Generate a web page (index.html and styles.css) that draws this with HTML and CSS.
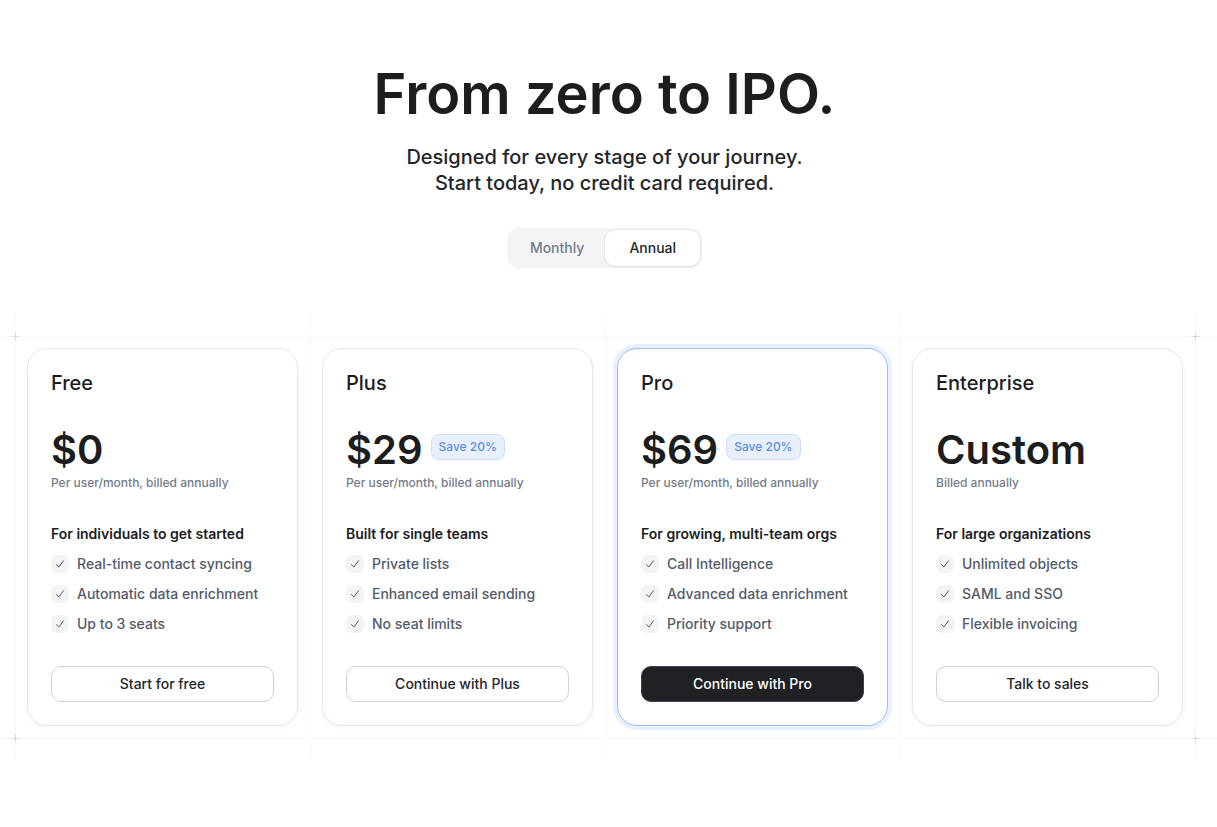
FILE: index.html
```html
<!DOCTYPE html>
<html lang="en">
<head>
    <meta charset="UTF-8">
    <meta name="viewport" content="width=device-width, initial-scale=1.0">
    <title>Pricing</title>
    <link rel="stylesheet" href="styles.css">
</head>
<body>
    <svg class="sprite" aria-hidden="true">
        <symbol id="check" viewBox="0 0 18 18">
            <path d="M5.4 9.6 L7.9 12 L12.5 5.7" fill="none" stroke="currentColor" stroke-width="1" stroke-linecap="round" stroke-linejoin="round"/>
        </symbol>
    </svg>

    <header class="hero">
        <h1>From zero to IPO.</h1>
        <p>Designed for every stage of your journey.<br>Start today, no credit card required.</p>
        <div class="toggle" role="group" aria-label="Billing period">
            <button type="button" aria-pressed="false">Monthly</button>
            <button type="button" class="active" aria-pressed="true">Annual</button>
        </div>
    </header>

    <main class="pricing">
        <div class="plans">
            <div class="cell">
                <section class="card">
                    <h2>Free</h2>
                    <div class="price"><strong>$0</strong></div>
                    <p class="billing">Per user/month, billed annually</p>
                    <h3>For individuals to get started</h3>
                    <ul>
                        <li><svg class="check"><use href="#check"/></svg>Real-time contact syncing</li>
                        <li><svg class="check"><use href="#check"/></svg>Automatic data enrichment</li>
                        <li><svg class="check"><use href="#check"/></svg>Up to 3 seats</li>
                    </ul>
                    <button type="button" class="btn">Start for free</button>
                </section>
            </div>

            <div class="cell">
                <section class="card">
                    <h2>Plus</h2>
                    <div class="price"><strong>$29</strong><span class="badge">Save 20%</span></div>
                    <p class="billing">Per user/month, billed annually</p>
                    <h3>Built for single teams</h3>
                    <ul>
                        <li><svg class="check"><use href="#check"/></svg>Private lists</li>
                        <li><svg class="check"><use href="#check"/></svg>Enhanced email sending</li>
                        <li><svg class="check"><use href="#check"/></svg>No seat limits</li>
                    </ul>
                    <button type="button" class="btn">Continue with Plus</button>
                </section>
            </div>

            <div class="cell">
                <section class="card featured">
                    <h2>Pro</h2>
                    <div class="price"><strong>$69</strong><span class="badge">Save 20%</span></div>
                    <p class="billing">Per user/month, billed annually</p>
                    <h3>For growing, multi-team orgs</h3>
                    <ul>
                        <li><svg class="check"><use href="#check"/></svg>Call Intelligence</li>
                        <li><svg class="check"><use href="#check"/></svg>Advanced data enrichment</li>
                        <li><svg class="check"><use href="#check"/></svg>Priority support</li>
                    </ul>
                    <button type="button" class="btn btn-dark">Continue with Pro</button>
                </section>
            </div>

            <div class="cell">
                <section class="card">
                    <h2>Enterprise</h2>
                    <div class="price"><strong>Custom</strong></div>
                    <p class="billing">Billed annually</p>
                    <h3>For large organizations</h3>
                    <ul>
                        <li><svg class="check"><use href="#check"/></svg>Unlimited objects</li>
                        <li><svg class="check"><use href="#check"/></svg>SAML and SSO</li>
                        <li><svg class="check"><use href="#check"/></svg>Flexible invoicing</li>
                    </ul>
                    <button type="button" class="btn">Talk to sales</button>
                </section>
            </div>

            <span class="cross top left"></span>
            <span class="cross top right"></span>
            <span class="cross bottom left"></span>
            <span class="cross bottom right"></span>
        </div>
    </main>
</body>
</html>
```

FILE: styles.css
```css
* {
    box-sizing: border-box;
}
body {
    margin: 0;
    min-height: 100vh;
    padding-bottom: 48px;
    font-family: Inter, "Liberation Sans", sans-serif;
    font-size: 14px;
    line-height: 20px;
    color: #1c1d1f;
    background-color: #fff;
}
h1, h2, h3, p, ul {
    margin: 0;
    padding: 0;
}
button {
    font: inherit;
    font-weight: 500;
    color: #232529;
    cursor: pointer;
}
.sprite {
    display: none;
}

/* hero */
.hero {
    display: flex;
    flex-direction: column;
    align-items: center;
    padding: 62px 22px 68px 14px;
    text-align: center;
}
.hero h1 {
    font-size: 56px;
    line-height: 64px;
    font-weight: 600;
    margin-bottom: 18px;
}
.hero p {
    font-size: 20px;
    line-height: 26px;
    font-weight: 500;
    color: #232529;
    margin-bottom: 32px;
}
.toggle {
    display: flex;
    padding: 2px;
    border-radius: 12px;
    background-color: #f3f4f6;
}
.toggle button {
    height: 36px;
    padding: 0 21px;
    border: none;
    border-radius: 10px;
    background: none;
    color: #737b89;
}
.toggle .active {
    padding: 0 24px;
    background-color: #fff;
    color: #232529;
    box-shadow: 0 0 2px rgba(28, 40, 64, 0.12), 0 1px 3px rgba(28, 40, 64, 0.08);
}

/* plans */
.pricing {
    padding: 0 22px 0 15px;
    border-top: 1px solid #f6f7f8;
    border-bottom: 1px solid #f6f7f8;
}
.plans {
    position: relative;
    display: grid;
    grid-template-columns: repeat(4, 1fr);
}
.cell {
    position: relative;
    padding: 11px 12px 12px;
}
.cell::before,
.cell:nth-child(4)::after {
    content: "";
    position: absolute;
    top: -32px;
    bottom: -32px;
    left: 0;
    width: 1px;
    background: linear-gradient(transparent, #f6f7f8 32px, #f6f7f8 calc(100% - 32px), transparent);
}
.cell:nth-child(4)::after {
    left: 100%;
}
.cross {
    position: absolute;
    width: 9px;
    height: 9px;
    background:
        linear-gradient(90deg, #e6e8eb, #ccd0d6, #e6e8eb) center / 9px 1px no-repeat,
        linear-gradient(#e6e8eb, #ccd0d6, #e6e8eb) center / 1px 9px no-repeat;
}
.top {
    top: -5px;
}
.bottom {
    bottom: -5px;
}
.left {
    left: -4px;
}
.right {
    right: -5px;
}
.card {
    display: flex;
    flex-direction: column;
    padding: 23px;
    border: 1px solid #e4e6e9;
    border-radius: 20px;
    background-color: #fff;
    box-shadow: 0 2px 4px rgba(28, 40, 64, 0.04);
}
.featured {
    border-color: #9dbcf2;
    box-shadow: 0 0 0 4px #e8f0fe;
}
.card h2 {
    font-size: 20px;
    line-height: 22px;
    font-weight: 500;
    margin-bottom: 34px;
}
.price {
    display: flex;
    align-items: flex-start;
    gap: 8px;
    margin-bottom: 3px;
}
.price strong {
    font-size: 40px;
    line-height: 44px;
    font-weight: 600;
}
.badge {
    margin-top: 6px;
    padding: 0 7px;
    border: 1px solid #cbdcfa;
    border-radius: 8px;
    background-color: #e8f0fe;
    color: #5c8fe0;
    font-size: 12px;
    line-height: 24px;
    font-weight: 500;
}
.billing {
    font-size: 12px;
    line-height: 16px;
    font-weight: 500;
    color: #737b89;
    margin-bottom: 33px;
}
.card h3 {
    font-size: 14px;
    font-weight: 600;
    margin-bottom: 10px;
}
.card ul {
    display: flex;
    flex-direction: column;
    gap: 10px;
    list-style: none;
    margin-bottom: 32px;
}
.card li {
    display: flex;
    align-items: center;
    gap: 8px;
    font-weight: 500;
    color: #535b68;
}
.check {
    width: 18px;
    height: 18px;
    border-radius: 6px;
    background-color: #f3f4f6;
}
.btn {
    height: 36px;
    border: 1px solid #cdd1d6;
    border-radius: 10px;
    background-color: #fff;
}
.btn-dark {
    border-color: #3a4352;
    background-color: #202125;
    color: #fff;
}

@media (max-width: 1000px) {
    .plans {
        grid-template-columns: repeat(2, 1fr);
    }
}
```
